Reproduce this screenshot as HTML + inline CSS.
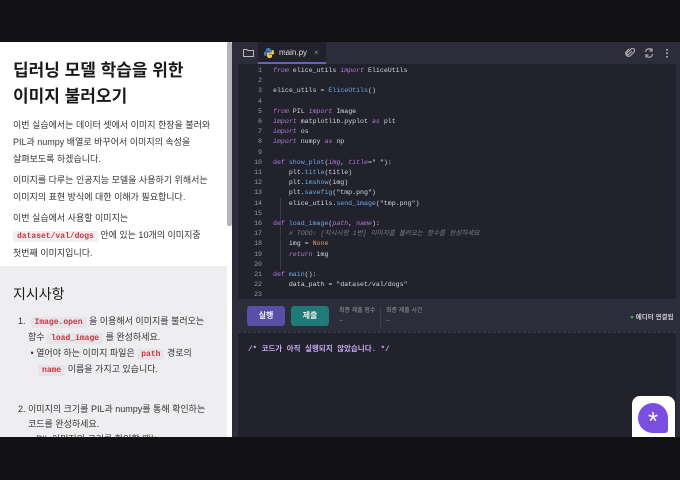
<!DOCTYPE html>
<html><head><meta charset="utf-8"><style>
*{margin:0;padding:0;box-sizing:border-box}
body{width:680px;height:480px;background:#111114;position:relative;overflow:hidden;font-family:"Liberation Sans","Noto Sans CJK KR",sans-serif}
.left{position:absolute;left:0;top:42px;width:232px;height:395px;background:#fff;overflow:hidden}
.gray{position:absolute;left:0;top:224px;width:227px;height:200px;background:#eeeef0}
.thumb{position:absolute;left:227px;top:0;width:5px;height:184px;background:#b5b5b5;border-radius:2px}
h1{position:absolute;left:13px;top:16px;font-size:17px;line-height:26px;font-weight:bold;color:#1a1a1a}
p{position:absolute;left:13px;font-size:9px;line-height:17px;color:#333;width:220px;white-space:nowrap}
code{font-family:"Liberation Mono","Noto Sans CJK KR",monospace;font-size:8px;color:#d0323a;background:#f0f0f2;padding:1px 4px;border-radius:2px;font-weight:bold}
.gray code{background:#e4e4ea}
h2{position:absolute;left:13px;top:18px;font-size:14px;font-weight:normal;color:#1a1a1a}
.ed{position:absolute;left:232px;top:42px;width:448px;height:395px;background:#2c2c3a}
.tabs{position:absolute;left:0;top:0;width:448px;height:22px;background:#2c2c3a}
.tab{position:absolute;left:26px;top:0;width:68px;height:22px;background:#22222c;border-bottom:2px solid #6c5fc7;color:#ddd;font-size:8px;line-height:22px;padding-left:21px}
.code{position:absolute;left:6px;top:22px;width:438px;height:235px;background:#22222c;font-family:"Liberation Mono","Noto Sans CJK KR",monospace;font-size:6.6px;color:#d6d6dc;overflow:hidden}
.ln{position:absolute;left:0;width:24px;text-align:right;color:#9a9aa6}
.cl{position:absolute;left:35px;white-space:pre}
.k{color:#b07ad8;font-style:italic}.f{color:#6ea8e8}.c{color:#7a7a8a;font-style:italic}.n{color:#e0a070}
.bar{position:absolute;left:6px;top:258px;width:442px;height:32px;background:#2c2c3a}
.btn{position:absolute;top:6px;width:38px;height:20px;border-radius:3px;color:#eee;font-size:8px;font-weight:bold;text-align:center;line-height:20px}
.out{position:absolute;left:6px;top:290px;width:438px;height:105px;background:#22222c;border-top:1px dashed #3a3a48}
</style></head><body>
<div class="left">
<h1>딥러닝 모델 학습을 위한<br>이미지 불러오기</h1>
<p style="top:75px">이번 실습에서는 데이터 셋에서 이미지 한장을 불러와<br>PIL과 numpy 배열로 바꾸어서 이미지의 속성을<br>살펴보도록 하겠습니다.</p>
<p style="top:130px">이미지를 다루는 인공지능 모델을 사용하기 위해서는<br>이미지의 표현 방식에 대한 이해가 필요합니다.</p>
<p style="top:168px">이번 실습에서 사용할 이미지는<br><code>dataset/val/dogs</code> 안에 있는 10개의 이미지중<br>첫번째 이미지입니다.</p>
<div class="gray">
<h2>지시사항</h2>
<p style="top:48px;left:18px;width:200px;line-height:15px">1.&nbsp; <code>Image.open</code> 을 이용해서 이미지를 불러오는<br>&nbsp;&nbsp;&nbsp;&nbsp;함수 <code>load_image</code> 를 완성하세요.<br>&nbsp;&nbsp;&nbsp;&nbsp;&nbsp;• 열어야 하는 이미지 파일은 <code>path</code> 경로의<br>&nbsp;&nbsp;&nbsp;&nbsp;&nbsp;&nbsp;&nbsp;&nbsp;<code>name</code> 이름을 가지고 있습니다.</p>
<p style="top:136px;left:18px;width:205px;line-height:15px">2. 이미지의 크기를 PIL과 numpy를 통해 확인하는<br>&nbsp;&nbsp;&nbsp;&nbsp;코드를 완성하세요.<br>&nbsp;&nbsp;&nbsp;&nbsp;&nbsp;• PIL 이미지의 크기를 확인할 때는</p>
</div>
<div class="thumb"></div>
</div>
<div class="ed">
<div class="tabs">
<svg style="position:absolute;left:11px;top:6px" width="11" height="9" viewBox="0 0 11 9"><path d="M.5 1.5h3.5l1 1h5.5v6h-10z" fill="none" stroke="#bbb" stroke-width="1"/></svg>
<div class="tab"><svg style="position:absolute;left:6px;top:6px" width="10" height="10" viewBox="0 0 10 10"><path d="M5 0C2 0 2 1 2 2v1h3v.5H1C0 3.5 0 5 0 5.5S0 8 1.5 8H2.5V6.5c0-1 1-1.5 2-1.5h2.5V2C7 1 6 0 5 0z" fill="#3e7bbf"/><path d="M5 10c3 0 3-1 3-2V7H5v-.5h4c1 0 1-1.5 1-2S10 2 8.5 2H7.5v1.5c0 1-1 1.5-2 1.5H3V8c0 1 1 2 2 2z" fill="#f2c744"/></svg>main.py<span style="position:absolute;left:56px;color:#888">×</span></div>
<svg style="position:absolute;left:393px;top:6px" width="10" height="10" viewBox="0 0 10 10"><path d="M7 3L3.5 6.5a1 1 0 0 1-1.5-1.5L6 1a2 2 0 0 1 3 3L5 8a3 3 0 0 1-4-4l3-3" fill="none" stroke="#aaa" stroke-width="1.2"/></svg>
<svg style="position:absolute;left:412px;top:6px" width="10" height="10" viewBox="0 0 10 10"><path d="M1.5 4a3.5 3.5 0 0 1 6.5-1.5M8.5 6a3.5 3.5 0 0 1-6.5 1.5M8 .5v2.5H5.5M2 9.5V7h2.5" fill="none" stroke="#aaa" stroke-width="1.2"/></svg>
<div style="position:absolute;left:434px;top:6px;width:2px;height:10px;background:radial-gradient(circle,#aaa 45%,transparent 50%) 0 0/2px 3.5px"></div>
</div>
<div class="code">
<div class="ln" style="top:2px;line-height:10.2px">1<br>2<br>3<br>4<br>5<br>6<br>7<br>8<br>9<br>10<br>11<br>12<br>13<br>14<br>15<br>16<br>17<br>18<br>19<br>20<br>21<br>22<br>23</div>
<div style="position:absolute;left:35px;top:12px;width:1px;height:0"></div>
<div style="position:absolute;left:42px;top:134px;width:1px;height:40px;background:#3a3a48"></div>
<div style="position:absolute;left:42px;top:175px;width:1px;height:30px;background:#3a3a48"></div>
<div style="position:absolute;left:42px;top:236px;width:1px;height:20px;background:#3a3a48"></div>
<div class="cl" style="top:2px;line-height:10.2px"><span class="k">from</span> elice_utils <span class="k">import</span> EliceUtils

elice_utils = <span class="f">EliceUtils</span>()

<span class="k">from</span> PIL <span class="k">import</span> Image
<span class="k">import</span> matplotlib.pyplot <span class="k">as</span> plt
<span class="k">import</span> os
<span class="k">import</span> numpy <span class="k">as</span> np

<span style="color:#b07ad8">def</span> <span class="f">show_plot</span>(<span class="k">img</span>, <span class="k">title</span>=" "):
    plt.<span class="f">title</span>(title)
    plt.<span class="f">imshow</span>(img)
    plt.<span class="f">savefig</span>("tmp.png")
    elice_utils.<span class="f">send_image</span>("tmp.png")

<span style="color:#b07ad8">def</span> <span class="f">load_image</span>(<span class="k">path</span>, <span class="k">name</span>):
    <span class="c"># TODO: [지시사항 1번] 이미지를 불러오는 함수를 완성하세요</span>
    img = <span class="n">None</span>
    <span class="k">return</span> img

<span style="color:#b07ad8">def</span> <span class="f">main</span>():
    data_path = "dataset/val/dogs"
</div>
</div>
<div class="bar">
<div class="btn" style="left:9px;background:#5a4fa8">실행</div>
<div class="btn" style="left:53px;background:#1f7a78">제출</div>
<div style="position:absolute;left:101px;top:6px;font-size:6px;color:#999;line-height:10px">최종 제출 점수<br>--</div>
<div style="position:absolute;left:142px;top:6px;width:1px;height:22px;background:#3c3c4a"></div>
<div style="position:absolute;left:148px;top:6px;font-size:6px;color:#999;line-height:10px">최종 제출 시간<br>--</div>
<div style="position:absolute;left:392px;top:11px;font-size:6.5px;color:#ccc;font-weight:bold"><span style="color:#2bb24c">●</span> 에디터 연결됨</div>
</div>
<div class="out"><div style="position:absolute;left:10px;top:10px;font-family:'Liberation Mono','Noto Sans CJK KR',monospace;font-size:7.5px;color:#c9a6f2;font-weight:bold">/* 코드가 아직 실행되지 않았습니다. */</div></div>
<div style="position:absolute;left:400px;top:354px;width:43px;height:41px;background:#fff;border-radius:8px 8px 0 0">
<div style="position:absolute;left:6px;top:7px;width:30px;height:30px;border-radius:50% 50% 3px 50%;background:#7a4ee0;color:#fff;font-size:26px;line-height:36px;text-align:center">*</div>
</div>
</div>
</body></html>
